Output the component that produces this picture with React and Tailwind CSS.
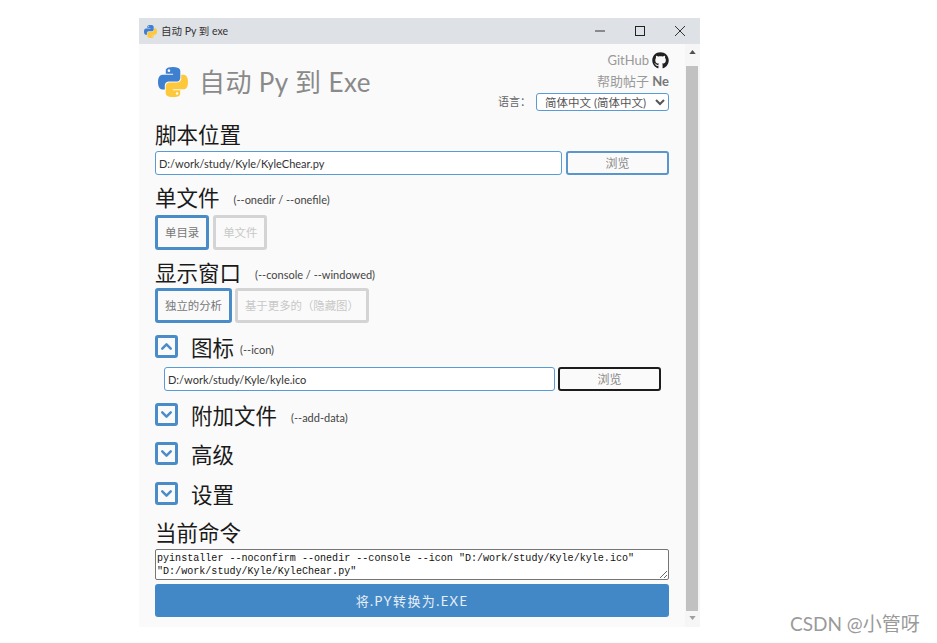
import { FaGithub } from "react-icons/fa";
import { ChevronDown, ChevronUp } from "lucide-react";

const font = "font-['Lato','Noto_Sans_CJK_SC',sans-serif]";

const PythonLogo = ({ className }) => (
  <svg viewBox="0 0 110 110" className={className}>
    <path
      fill="#3f7fd0"
      d="M54.9 0C26.8 0 28.6 12.2 28.6 12.2v12.6h26.8v3.8H17.9S0 26.6 0 54.9c0 28.3 15.6 27.3 15.6 27.3h9.3V69.1s-.5-15.6 15.4-15.6h26.5s14.9.2 14.9-14.4V14.9S83.9 0 54.9 0zM40.1 8.5a4.8 4.8 0 1 1 0 9.6 4.8 4.8 0 0 1 0-9.6z"
    />
    <path
      fill="#fdc83c"
      transform="rotate(180 55 55.2)"
      d="M54.9 0C26.8 0 28.6 12.2 28.6 12.2v12.6h26.8v3.8H17.9S0 26.6 0 54.9c0 28.3 15.6 27.3 15.6 27.3h9.3V69.1s-.5-15.6 15.4-15.6h26.5s14.9.2 14.9-14.4V14.9S83.9 0 54.9 0zM40.1 8.5a4.8 4.8 0 1 1 0 9.6 4.8 4.8 0 0 1 0-9.6z"
    />
  </svg>
);

const Heading = ({ children, hint, hintGap = "ml-[14px]", className = "" }) => (
  <div className={`flex items-center text-[21.5px] leading-[30px] text-[#1a1a1a] ${className}`}>
    <span>{children}</span>
    {hint && <span className={`${hintGap} pt-[3px] text-[11px] leading-none text-[#444]`}>{hint}</span>}
  </div>
);

const PathInput = ({ value }) => (
  <input
    readOnly
    value={value}
    className="h-6 min-w-0 flex-1 rounded-[3px] border border-[#5a9bd5] bg-white px-[3px] text-[11px] text-[#333] outline-none"
  />
);

const BrowseButton = ({ dark }) => (
  <button className={`h-6 w-[103px] rounded-[3px] border-2 bg-[#fafafa] pt-px text-[12px] text-[#888] ${dark ? "border-[#1c1c1c]" : "border-[#5a96cc]"}`}>
    浏览
  </button>
);

const Toggle = ({ active, children }) => (
  <button
    className={`h-[35px] rounded-[3px] border-[3px] bg-[#fafafa] px-[7px] text-[11.4px] ${
      active ? "border-[#4a8cc7] text-[#777]" : "border-[#d4d4d4] text-[#c8c8c8]"
    }`}
  >
    {children}
  </button>
);

const Collapse = ({ open, title, hint, hintGap, className = "" }) => (
  <div className={`flex h-[23px] items-center ${className}`}>
    <span className="flex h-[23px] w-[23px] items-center justify-center rounded-[3px] border-[3px] border-[#4a8cc7] text-[#4a8cc7]">
      {open ? <ChevronUp size={17} strokeWidth={3.5} /> : <ChevronDown size={17} strokeWidth={3.5} />}
    </span>
    <Heading hint={hint} hintGap={hintGap} className="ml-[13px] pt-[2px]">{title}</Heading>
  </div>
);

export default function App() {
  return (
    <div className={`relative h-[643px] w-[937px] overflow-hidden bg-white pl-[139px] pt-[18px] ${font}`}>
      <div className="flex h-[609px] w-[561px] flex-col bg-[#fafafa]">
        {/* title bar */}
        <div className="flex h-[26px] items-center bg-[#dee1e6] pl-[5px] pr-[15px]">
          <PythonLogo className="h-[13px] w-[13px]" />
          <span className="ml-[4px] pt-px text-[10.5px] text-[#333]">自动 Py 到 exe</span>
          <div className="ml-auto flex items-center gap-[30px]">
            <svg viewBox="0 0 10 10" className="h-[10px] w-[10px]"><path d="M0 5h10" stroke="#333" strokeWidth="1" /></svg>
            <svg viewBox="0 0 10 10" className="h-[10px] w-[10px]"><rect x="0.5" y="0.5" width="9" height="9" fill="none" stroke="#222" strokeWidth="1" /></svg>
            <svg viewBox="0 0 10 10" className="h-[10px] w-[10px]"><path d="M0 0l10 10M10 0L0 10" stroke="#333" strokeWidth="1" /></svg>
          </div>
        </div>

        <div className="flex min-h-0 flex-1">
          <div className="flex-1 px-4">
            {/* header */}
            <div className="flex h-[76px] justify-between">
              <div className="flex items-center pl-[3px]">
                <PythonLogo className="h-[30px] w-[30px]" />
                <span className="ml-[11px] text-[26px] leading-none tracking-[0.4px] text-[#8a8a8a]">自动 Py 到 Exe</span>
              </div>
              <div className="flex flex-col items-end pt-[7px]">
                <div className="flex h-[19px] items-center text-[13px] text-[#999]">
                  GitHub
                  <FaGithub className="ml-[3px] text-[17px] text-[#222]" />
                </div>
                <div className="mt-[2px] h-[19px] text-[13px] leading-[19px] text-[#999]">
                  帮助帖子 <b className="text-[#777]">Ne</b>
                </div>
                <div className="mt-[2px] flex items-center">
                  <span className="mr-[5px] text-[11px] text-[#666]">语言：</span>
                  <select className="h-[18px] w-[133px] rounded-[3px] border border-[#5a9bd5] bg-white pl-[4px] text-[11.5px] text-[#555]">
                    <option>简体中文 (简体中文)</option>
                  </select>
                </div>
              </div>
            </div>

            <Heading className="h-[31px] pb-[2px]">脚本位置</Heading>
            <div className="flex gap-1">
              <PathInput value="D:/work/study/Kyle/KyleChear.py" />
              <BrowseButton />
            </div>

            <Heading hint="(--onedir / --onefile)" className="mt-2">单文件</Heading>
            <div className="mt-[2px] flex gap-1">
              <Toggle active>单目录</Toggle>
              <Toggle>单文件</Toggle>
            </div>

            <Heading hint="(--console / --windowed)" className="mt-2">显示窗口</Heading>
            <div className="flex gap-[3px]">
              <Toggle active>独立的分析</Toggle>
              <Toggle>基于更多的（隐藏图）</Toggle>
            </div>

            <Collapse open title="图标" hint="(--icon)" hintGap="ml-[6px]" className="mt-3" />
            <div className="ml-[9px] mr-2 mt-[9px] flex gap-[3px]">
              <PathInput value="D:/work/study/Kyle/kyle.ico" />
              <BrowseButton dark />
            </div>

            <Collapse title="附加文件" hint="(--add-data)" className="mt-3" />
            <Collapse title="高级" className="mt-4" />
            <Collapse title="设置" className="mt-[17px]" />

            <Heading className="mt-[13px]">当前命令</Heading>
            <textarea
              readOnly
              value={'pyinstaller --noconfirm --onedir --console --icon "D:/work/study/Kyle/kyle.ico" "D:/work/study/Kyle/KyleChear.py"'}
              className="mt-[1px] block h-[31px] w-full rounded-[2px] border border-[#767676] bg-white px-px pt-[2px] text-[10.07px] leading-[13px] text-[#111] font-['Liberation_Mono',monospace] outline-none"
            />
            <button className="mt-1 h-[33px] w-full rounded-[3px] bg-[#4388c6] pt-[3px] text-[13px] tracking-[1.4px] text-[#e6eef6]">
              将.PY转换为.EXE
            </button>
          </div>

          {/* scrollbar */}
          <div className="flex w-[15px] flex-col bg-[#f6f6f6]">
            <svg viewBox="0 0 8 5" className="ml-[4px] mt-[6px] h-[4px] w-[7px]"><path d="M4 0l4 5H0z" fill="#505050" /></svg>
            <div className="ml-px mt-[12px] h-[545px] w-[12px] bg-[#c1c1c1]" />
            <svg viewBox="0 0 8 5" className="ml-[4px] mt-[5px] h-[4px] w-[7px]"><path d="M4 5L0 0h8z" fill="#a0a0a0" /></svg>
          </div>
        </div>
      </div>

      <span className="absolute left-[790px] top-[613px] text-[19px] leading-[22px] text-[#9a9a9a]">CSDN @小管呀</span>
    </div>
  );
}
